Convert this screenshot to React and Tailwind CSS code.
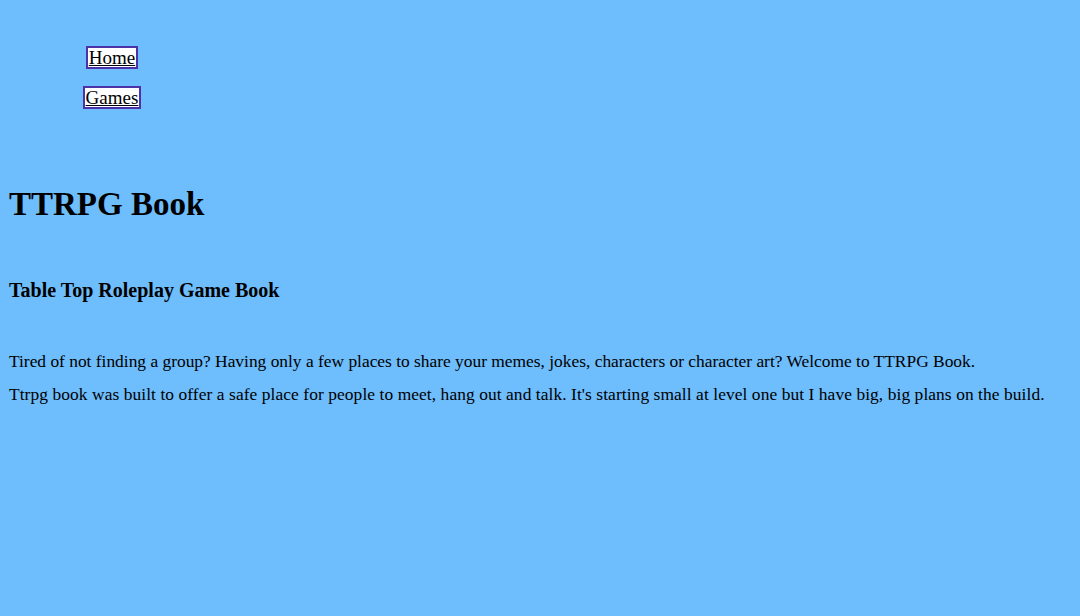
import React from "react";

export default function App() {
  return (
    <div className="min-h-[616px] bg-[#6ebdfc] text-black font-['Liberation_Serif',serif]">
      <nav className="w-[224px] pt-[46px]">
        <ul className="flex flex-col items-center gap-[17px]">
          <li>
            <a href="#" className="block border-2 border-[#4b32a8] bg-white px-px text-[19px] leading-[19px] underline">
              Home
            </a>
          </li>
          <li>
            <a href="#" className="block border-2 border-[#4b32a8] bg-white px-px text-[19px] leading-[19px] underline">
              Games
            </a>
          </li>
        </ul>
      </nav>
      <main className="px-[9px]">
        <h1 className="mt-[75px] text-[33px] font-bold leading-[40px]">TTRPG Book</h1>
        <h3 className="mt-[54px] text-[20px] font-bold leading-[24px]">Table Top Roleplay Game Book</h3>
        <p className="mt-[48px] text-[17.4px] leading-[22px]">
          Tired of not finding a group? Having only a few places to share your memes, jokes, characters or character art? Welcome to TTRPG Book.
        </p>
        <p className="mt-[11px] text-[17.4px] leading-[22px] tracking-[0.08px]">
          Ttrpg book was built to offer a safe place for people to meet, hang out and talk. It's starting small at level one but I have big, big plans on the build.
        </p>
      </main>
    </div>
  );
}
